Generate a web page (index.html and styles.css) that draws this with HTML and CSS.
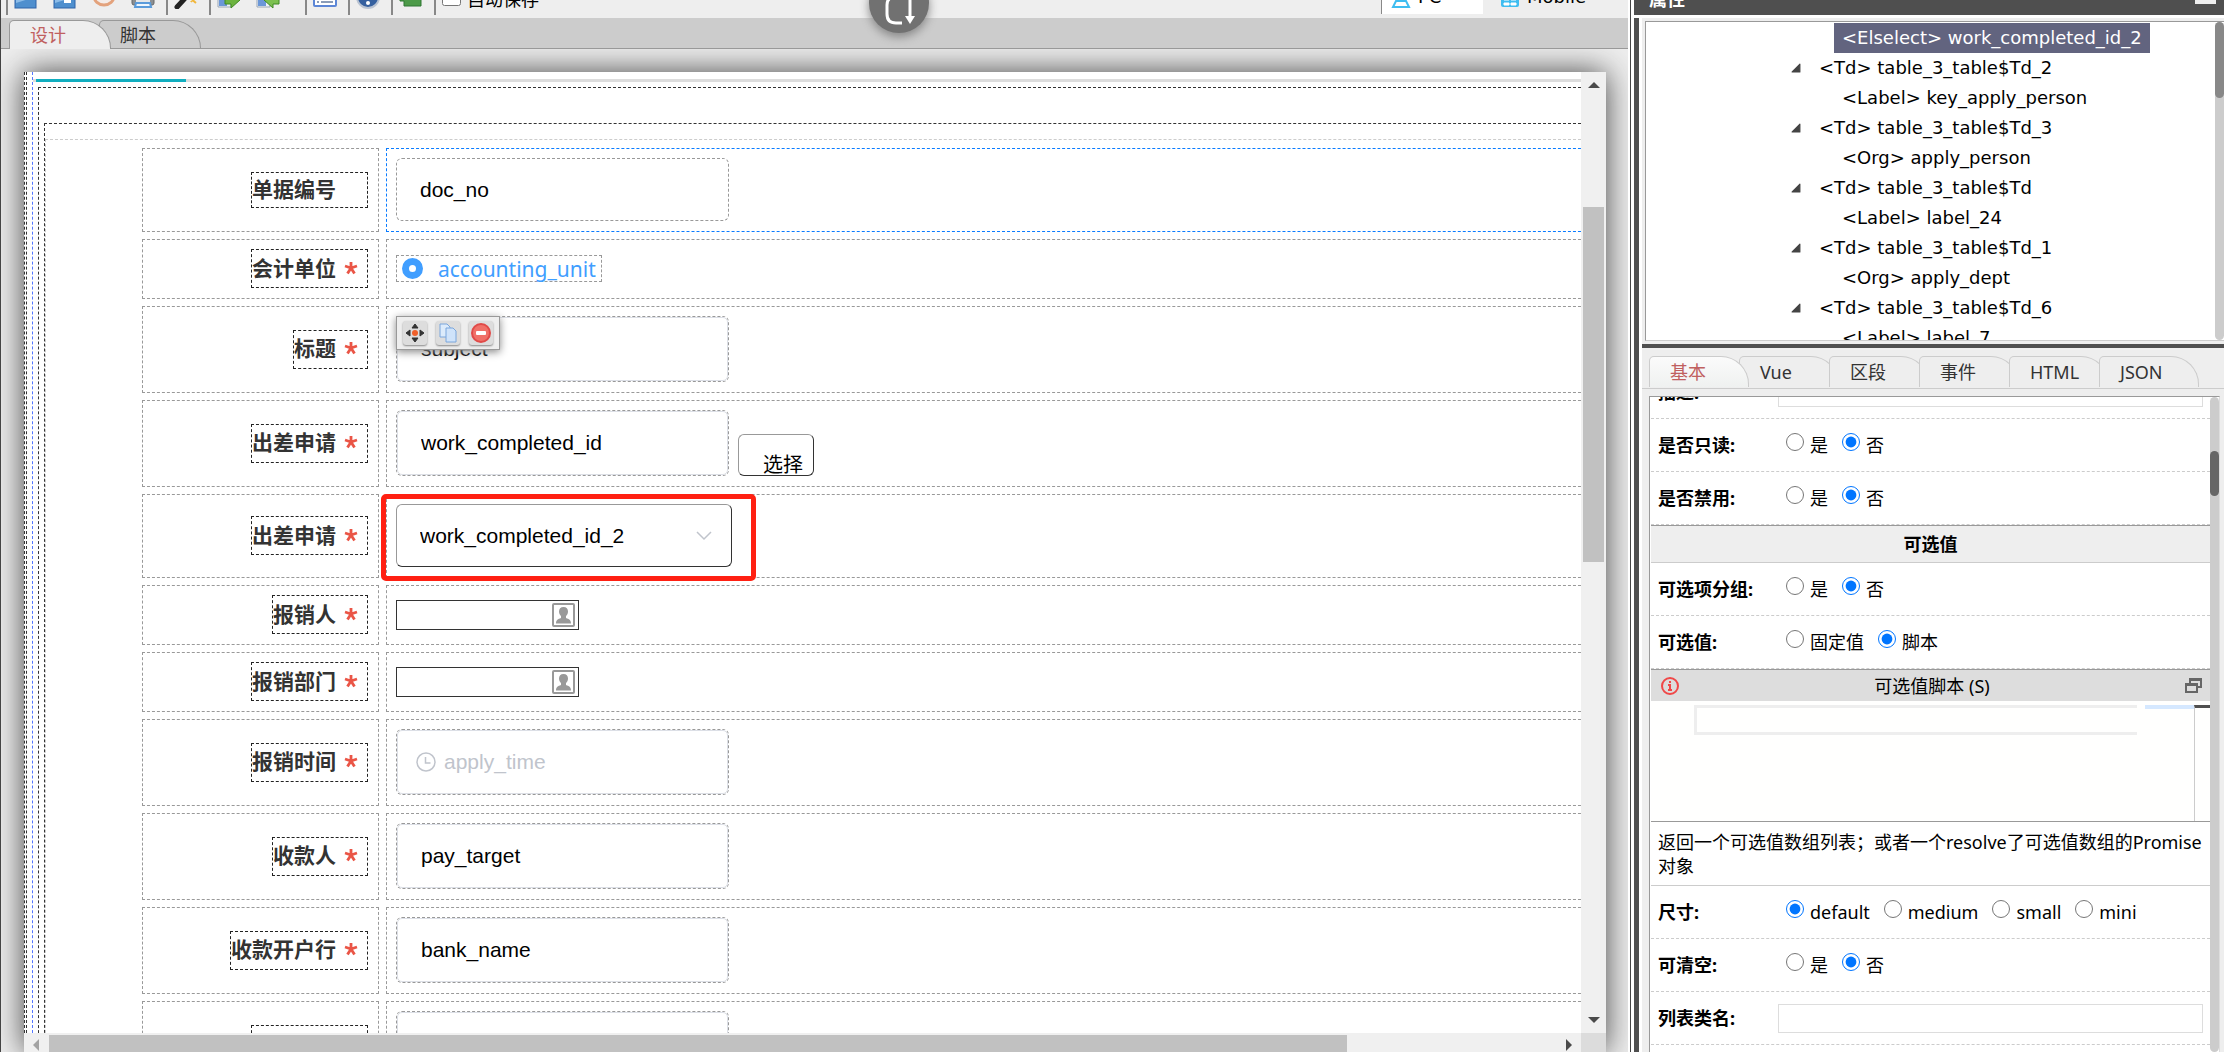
FILE: index.html
```html
<!DOCTYPE html>
<html lang="zh-CN">
<head>
<meta charset="utf-8">
<title>表单设计器</title>
<link rel="stylesheet" href="styles.css">
</head>
<body>
<svg class="defs" aria-hidden="true">
  <symbol id="star" viewBox="0 0 14 14"><path d="M7 1v6M7 7L1 5M7 7l6-2M7 7l-3.500 5.500M7 7l3.500 5.500" fill="none" stroke="#ea5546" stroke-width="2.800"/></symbol>
  <symbol id="person" viewBox="0 0 23 24"><rect x="1" y="1" width="21" height="22" rx="1" fill="#fff" stroke="#999" stroke-width="2"/><path d="M11.500 4c3 0 4.500 2 4.500 4.500 0 2-1 3.500-2 4.500v2c3 1 5 2 5 5.500H4c0-3.500 2-4.500 5-5.500v-2c-1-1-2-2.500-2-4.500C7 6 8.500 4 11.500 4z" fill="#999"/></symbol>
  <symbol id="twist" viewBox="0 0 9 9"><path d="M8 1v7H1z" fill="#444" stroke="#444" stroke-linejoin="round"/></symbol>
</svg>
<div class="app">
  <main class="editor">
    <header class="toolbar">
      <div class="tools">
        <i class="sep"></i>
        <button class="tool" aria-label="保存"><svg viewBox="0 0 24 24"><rect x="1" y="1" width="21" height="22" fill="#4f8fce" stroke="#2f62a8"/><path d="M2 2h19v10L2 18z" fill="#8dbce8"/></svg></button>
        <button class="tool" aria-label="另存"><svg viewBox="0 0 24 24"><rect x="1" y="1" width="21" height="22" fill="#4f8fce" stroke="#2f62a8"/><path d="M2 2h19v10L2 18z" fill="#8dbce8"/><rect x="11" y="3" width="7" height="15" fill="#fff"/></svg></button>
        <button class="tool" aria-label="预览"><svg viewBox="0 0 24 24"><ellipse cx="12" cy="11" rx="10" ry="9" fill="#f4ece8" stroke="#e3a27c" stroke-width="3"/><path d="M6 11q6 7 12 0z" fill="#a9c8ee"/></svg></button>
        <button class="tool" aria-label="打印"><svg viewBox="0 0 24 24"><rect x="1" y="8" width="22" height="12" rx="2" fill="#8b8f92" stroke="#666"/><rect x="5" y="11" width="14" height="6" fill="#e4e6e8"/><path d="M4 22h16l-1-4H5z" fill="#eef6fd" stroke="#5a9bdb" stroke-width="2"/></svg></button>
        <i class="sep"></i>
        <button class="tool" aria-label="样式"><svg viewBox="0 0 24 24"><path d="M3 22L15 9" stroke="#222" stroke-width="5" stroke-linecap="round"/><path d="M8 14l4-4" stroke="#999" stroke-width="2"/><path d="M15 12l7 6M17 17l3-5" stroke="#f1b73c" stroke-width="2"/></svg></button>
        <i class="sep"></i>
        <button class="tool" aria-label="导出"><svg viewBox="0 0 24 24"><path d="M1 1h13v21H1z" fill="#eef3f8" stroke="#9aa6b5"/><path d="M2 21V14h8v7z" fill="#6b97d8"/><path d="M8 11h6V7l9 8-9 8v-4H8z" fill="#6cb33f" stroke="#3f8a22"/></svg></button>
        <button class="tool" aria-label="导入"><svg viewBox="0 0 24 24"><path d="M1 1h13v21H1z" fill="#eef3f8" stroke="#9aa6b5"/><path d="M2 21V14h8v7z" fill="#6b97d8"/><path d="M23 11h-6V7l-9 8 9 8v-4h6z" fill="#7cc050" stroke="#3f8a22"/></svg></button>
        <i class="drop"></i>
        <i class="sep"></i>
        <button class="tool" aria-label="列表"><svg viewBox="0 0 24 24"><rect x="1" y="1" width="22" height="20" rx="1" fill="#fff" stroke="#5c86d6" stroke-width="2"/><path d="M4 8h2M8 8h12M4 13h2M8 13h12M4 17h2M8 17h12" stroke="#8a9cb8" stroke-width="2"/></svg></button>
        <i class="sep"></i>
        <button class="tool" aria-label="帮助"><svg viewBox="0 0 24 24"><circle cx="12" cy="12" r="11" fill="#35609f" stroke="#b9c3d2" stroke-width="2"/><circle cx="12" cy="18" r="2" fill="#fff"/><path d="M12 15v-4" stroke="#fff" stroke-width="3"/></svg></button>
        <i class="sep"></i>
        <button class="tool" aria-label="组件"><svg viewBox="0 0 24 24"><path d="M1 8h7l2 3h12v10H5v-5H1z" fill="#4c9a48" stroke="#2e7732"/></svg></button>
        <i class="sep"></i>
        <label class="autosave"><input type="checkbox"> 自动保存</label>
        <div class="devices">
          <button class="device on"><svg viewBox="0 0 22 22"><path d="M1 2h20v11H1z" fill="#8fdcf8" stroke="#3fbdf0" stroke-width="2"/><path d="M6 15h10l3 6H3z" fill="#fff" stroke="#3fbdf0" stroke-width="2"/></svg>PC</button>
          <button class="device"><svg viewBox="0 0 22 22"><rect x="2" y="1" width="18" height="20" rx="2" fill="#3fbdf0"/><path d="M4 8h14M5 12h5v2H5zM12 12h5v2h-5zM5 17h5v2H5zM12 17h5v2h-5z" fill="#fff" stroke="#fff"/></svg>Mobile</button>
        </div>
      </div>
    </header>
    <nav class="maintabs">
      <button class="maintab on">设计</button>
      <button class="maintab">脚本</button>
    </nav>
    <button class="refresh" aria-label="刷新"><svg viewBox="0 0 34 34"><path d="M18 6h-5q-8 0-8 8v9q0 9 9 9h6M28 4v22" fill="none" stroke="#fff" stroke-width="3"/><path d="M23 25h10l-5 8z" fill="#fff"/></svg></button>
    <section class="canvas">
      <div class="page">
        <div class="view">
          <div class="frame1"><div class="frame2">
            <div class="line"><span></span></div>
            <div class="box1"><div class="box2"><div class="box3">
              <form class="form">
                <div class="cell name"><label class="lab plain" for="f1">单据编号</label></div>
                <div class="cell sel"><input class="field flat" id="f1" value="doc_no"></div>

                <div class="cell name"><span class="lab">会计单位<svg><use href="#star"/></svg></span></div>
                <div class="cell"><label class="unit"><input type="radio" name="unit" checked>accounting_unit</label></div>

                <div class="cell name"><label class="lab" for="f3">标题<svg><use href="#star"/></svg></label></div>
                <div class="cell"><div class="wrap"><input class="field" id="f3" value="subject"></div>
                  <div class="actions">
                    <button type="button" aria-label="移动"><svg viewBox="0 0 20 20"><path d="M10 1l3 4H7zM10 19l-3-4h6zM1 10l4-3v6zM19 10l-4 3V7z" fill="#333" stroke="#333"/><circle cx="10" cy="10" r="3" fill="#f0602a"/></svg></button>
                    <button type="button" aria-label="复制"><svg viewBox="0 0 20 20"><path d="M2 1h7l3 3v10H2z" fill="#dcebfb" stroke="#7ba6dc"/><path d="M8 5h7l3 3v11H8z" fill="#cfe3fa" stroke="#7ba6dc"/></svg></button>
                    <button type="button" aria-label="删除"><svg viewBox="0 0 20 20"><circle cx="10" cy="10" r="9" fill="#f07068" stroke="#e04a48" stroke-width="2"/><rect x="5" y="8" width="10" height="4" rx="1" fill="#fff"/></svg></button>
                  </div>
                </div>

                <div class="cell name"><label class="lab" for="f4">出差申请<svg><use href="#star"/></svg></label></div>
                <div class="cell"><div class="wrap"><input class="field" id="f4" value="work_completed_id"></div><button type="button" class="pick">选择</button></div>

                <div class="cell name"><label class="lab" for="f5">出差申请<svg><use href="#star"/></svg></label></div>
                <div class="cell"><div class="drop-wrap"><select class="choice" id="f5"><option>work_completed_id_2</option></select><svg viewBox="0 0 16 10"><path d="M1 1l7 7 7-7" fill="none" stroke="#c0c4cc" stroke-width="1.500"/></svg></div><div class="mark"></div></div>

                <div class="cell name"><label class="lab" for="f6">报销人<svg><use href="#star"/></svg></label></div>
                <div class="cell"><div class="org"><input id="f6"><svg><use href="#person"/></svg></div></div>

                <div class="cell name"><label class="lab" for="f7">报销部门<svg><use href="#star"/></svg></label></div>
                <div class="cell"><div class="org"><input id="f7"><svg><use href="#person"/></svg></div></div>

                <div class="cell name"><label class="lab" for="f8">报销时间<svg><use href="#star"/></svg></label></div>
                <div class="cell"><div class="wrap time"><svg viewBox="0 0 20 20"><circle cx="10" cy="10" r="9" fill="none" stroke="#c0c4cc" stroke-width="1.500"/><path d="M9.500 5v6h5" fill="none" stroke="#c0c4cc" stroke-width="1.500"/></svg><input class="field" id="f8" placeholder="apply_time"></div></div>

                <div class="cell name"><label class="lab" for="f9">收款人<svg><use href="#star"/></svg></label></div>
                <div class="cell"><div class="wrap"><input class="field" id="f9" value="pay_target"></div></div>

                <div class="cell name"><label class="lab" for="f10">收款开户行<svg><use href="#star"/></svg></label></div>
                <div class="cell"><div class="wrap"><input class="field" id="f10" value="bank_name"></div></div>

                <div class="cell name"><label class="lab" for="f11">收款账号<svg><use href="#star"/></svg></label></div>
                <div class="cell"><div class="wrap"><input class="field" id="f11"></div></div>
              </form>
            </div></div></div>
          </div></div>
        </div>
        <div class="vbar"><i class="up"></i><i class="vthumb"></i><i class="down"></i></div>
        <div class="hbar"><i class="left"></i><i class="hthumb"></i><i class="right"></i></div>
        <div class="corner"></div>
      </div>
    </section>
  </main>

  <div class="gutter"></div>

  <aside class="side">
    <header class="sidehead"><span>属性</span><i></i></header>
    <div class="sidebody">
      <div class="treebox">
        <ul class="tree">
          <li class="leaf"><span class="picked">&lt;Elselect&gt; work_completed_id_2</span></li>
          <li><svg><use href="#twist"/></svg>&lt;Td&gt; table_3_table$Td_2</li>
          <li class="leaf"><span>&lt;Label&gt; key_apply_person</span></li>
          <li><svg><use href="#twist"/></svg>&lt;Td&gt; table_3_table$Td_3</li>
          <li class="leaf"><span>&lt;Org&gt; apply_person</span></li>
          <li><svg><use href="#twist"/></svg>&lt;Td&gt; table_3_table$Td</li>
          <li class="leaf"><span>&lt;Label&gt; label_24</span></li>
          <li><svg><use href="#twist"/></svg>&lt;Td&gt; table_3_table$Td_1</li>
          <li class="leaf"><span>&lt;Org&gt; apply_dept</span></li>
          <li><svg><use href="#twist"/></svg>&lt;Td&gt; table_3_table$Td_6</li>
          <li class="leaf"><span>&lt;Label&gt; label_7</span></li>
        </ul>
        <div class="treebar"><i></i></div>
      </div>
      <div class="splitter"></div>
      <nav class="tabs">
        <button class="tab on">基本</button><button class="tab">Vue</button><button class="tab">区段</button><button class="tab">事件</button><button class="tab">HTML</button><button class="tab">JSON</button>
      </nav>
      <div class="props">
        <div class="list">
          <div class="row"><label class="key" for="p0">描述:</label><input class="text" id="p0"></div>
          <div class="row"><span class="key">是否只读:</span><div class="opts"><label><input type="radio" name="ro">是</label><label><input type="radio" name="ro" checked>否</label></div></div>
          <div class="row"><span class="key">是否禁用:</span><div class="opts"><label><input type="radio" name="dis">是</label><label><input type="radio" name="dis" checked>否</label></div></div>
          <h3 class="group">可选值</h3>
          <div class="row"><span class="key">可选项分组:</span><div class="opts"><label><input type="radio" name="grp">是</label><label><input type="radio" name="grp" checked>否</label></div></div>
          <div class="row"><span class="key">可选值:</span><div class="opts"><label><input type="radio" name="val">固定值</label><label><input type="radio" name="val" checked>脚本</label></div></div>
          <div class="scripthead">
            <svg viewBox="0 0 18 18"><circle cx="9" cy="9" r="8" fill="none" stroke="#f04848" stroke-width="2"/><path d="M9 4v2M7 8h2v5M7 13h4" fill="none" stroke="#f04848" stroke-width="2"/></svg>
            <span>可选值脚本 (S)</span>
            <svg viewBox="0 0 18 18"><path d="M5 6V2h11v8h-4M1 7h11v8H1zM5 3h11M1 8h11" fill="none" stroke="#666" stroke-width="2"/></svg>
          </div>
          <div class="code"><div class="codeline"></div><div class="minimap"></div><div class="ruler"></div></div>
          <p class="help">返回一个可选值数组列表；或者一个resolve了可选值数组的Promise对象</p>
          <div class="row"><span class="key">尺寸:</span><div class="opts"><label><input type="radio" name="size" checked>default</label><label><input type="radio" name="size">medium</label><label><input type="radio" name="size">small</label><label><input type="radio" name="size">mini</label></div></div>
          <div class="row"><span class="key">可清空:</span><div class="opts"><label><input type="radio" name="clr">是</label><label><input type="radio" name="clr" checked>否</label></div></div>
          <div class="row"><label class="key" for="p1">列表类名:</label><input class="text" id="p1"></div>
          <div class="row"></div>
        </div>
        <div class="propbar"><i></i></div>
      </div>
    </div>
  </aside>
</div>
</body>
</html>
```
FILE: styles.css
```css
* { box-sizing: border-box; }
body {
  margin: 0;
  background: #fff;
  color: #000;
  font: 18px/24px "Noto Sans", "Noto Sans CJK SC", sans-serif;
}
button, input, select { font: inherit; color: inherit; margin: 0; padding: 0; border: 0; background: none; }
i { font-style: normal; }
.defs { display: none; }
.app { display: flex; height: 100vh; overflow: hidden; }

/* editor column */
.editor {
  position: relative;
  flex: 1;
  min-width: 0;
  display: flex;
  flex-direction: column;
  border-left: 1px solid #444;
  background: #fff;
}
.toolbar {
  display: flex;
  align-items: flex-end;
  height: 18px;
  overflow: hidden;
  background: #eee;
}
.tools { display: flex; align-items: center; flex: 1; height: 38px; padding-left: 5px; gap: 14px; }
.sep { width: 2px; height: 35px; background: #888; margin: 0 -8px 0 -4px; align-self: flex-start; flex: none; }
.sep:first-child { margin-left: 0; }
.tool { width: 25px; height: 24px; margin-bottom: 4px; }
.tool svg { display: block; width: 24px; height: 24px; }
.drop { width: 0; height: 0; margin: 0 0 0 -8px; border: 4px solid transparent; border-top-color: #222; }
.autosave { display: flex; align-items: center; gap: 6px; }
.autosave input { width: 19px; height: 19px; margin-bottom: 5px; }
.devices { display: flex; align-items: flex-start; align-self: stretch; margin-left: auto; padding-right: 34px; }
.device { display: flex; align-items: center; gap: 6px; height: 34px; padding: 0 8px; font: 18px/24px "DejaVu Sans", sans-serif; }
.device svg { width: 22px; height: 22px; }
.device.on { width: 102px; margin-right: 8px; background: #fff; border-left: 1px solid #888; }

.maintabs { display: flex; align-items: flex-end; height: 31px; padding-left: 8px; background: #ccc; border-bottom: 1px solid #999; }
.maintab {
  width: 102px;
  height: 28px;
  padding-left: 20px;
  text-align: left;
  color: #333;
  border: 1px solid #999;
  border-bottom: 0;
  border-radius: 5px 28px 0 0;
  margin-left: -12px;
  line-height: 28px;
}
.maintab.on { position: relative; margin: 0 0 -1px 0; height: 29px; background: #eee; color: #c0605f; }
.refresh {
  position: absolute;
  left: 868px;
  top: -27px;
  width: 60px;
  height: 60px;
  border-radius: 50%;
  background: #717171;
  box-shadow: 0 4px 10px #888;
}
.refresh svg { display: block; width: 34px; height: 34px; margin: 10px auto 0; }

.canvas { flex: 1; min-height: 0; overflow: hidden; background: #eee; padding: 23px 22px 0 23px; }
.page {
  display: grid;
  grid-template: minmax(0, 1fr) 19px / minmax(0, 1fr) 25px;
  height: 100%;
  background: #fff;
  box-shadow: 0 0 30px #444;
}
.view { overflow: hidden; border-left: 1px dashed #333; padding-left: 1px; }
.frame1 { height: 100%; border-left: 1px dashed #333; padding-left: 5px; }
.frame2 { height: 100%; border-left: 1px dashed #5577ff; padding: 7px 0 0; }
.line { height: 3px; background: #ddd; padding-left: 3px; }
.line span { display: block; width: 150px; height: 3px; background: #10aebf; }
.box1 { margin: 5px 0 0 5px; padding: 35px 0 0 5px; border: dashed #333; border-width: 1px 0 0 1px; }
.box2 { padding-top: 15px; border: dashed #333; border-width: 1px 0 0 1px; }
.box3 { border: dashed #ccc; border-width: 1px 0 0 1px; padding: 8px 0 0 96px; }

.form { display: grid; grid-template-columns: 237px minmax(0, 1fr); gap: 7px; margin-right: -20px; }
.cell {
  position: relative;
  display: flex;
  align-items: center;
  border: 1px dashed #999;
  padding: 9px 9px 10px;
}
.cell.sel { border-color: #0a7cff; }
.name { justify-content: flex-end; padding-right: 10px; }
.lab {
  display: flex;
  align-items: center;
  gap: 8px;
  height: 39px;
  padding: 0 9px 2px 0;
  border: 1px dashed #222;
  color: #333;
  font-size: 21px;
  line-height: 34px;
  font-weight: bold;
  white-space: nowrap;
}
.lab.plain { height: 36px; padding-right: 31px; }
.lab svg { width: 14px; height: 14px; }
.wrap { width: 333px; border: 1px dashed #999; border-radius: 6px; height: 66px; }
.field {
  display: block;
  width: 100%;
  height: 64px;
  padding: 0 23px;
  border: 1px solid #dcdfe6;
  border-radius: 5px;
  font: 21px/24px "Liberation Sans", Arial, sans-serif;
}
.field::placeholder { color: #c0c4cc; opacity: 1; }
.field.flat { width: 333px; height: 63px; border: 1px dashed #999; border-radius: 6px; }
.time { position: relative; }
.time svg { position: absolute; left: 19px; top: 22px; width: 20px; height: 20px; }
.time .field { padding-left: 46px; }
.unit {
  display: flex;
  align-items: center;
  gap: 15px;
  height: 27px;
  padding: 0 5px;
  border: 1px dashed #999;
  color: #409eff;
  font-size: 21px;
}
.unit input { appearance: none; width: 21px; height: 21px; border: 7px solid #409eff; border-radius: 50%; background: #fff; }
.actions {
  position: absolute;
  left: 9px;
  top: 9px;
  display: flex;
  gap: 9px;
  padding: 4px 6px;
  border: 1px solid #999;
  background: #eee;
  box-shadow: 0 2px 8px #888;
}
.actions button { width: 24px; height: 24px; padding: 2px; border-radius: 3px; background: #ddd; box-shadow: 0 1px 2px #888; }
.actions svg { display: block; width: 20px; height: 20px; }
.pick {
  align-self: flex-end;
  width: 76px;
  height: 42px;
  margin-left: 9px;
  padding: 20px 0 0 14px;
  border: 1px solid #999;
  border-right-color: #333;
  border-bottom-color: #333;
  border-radius: 6px;
  font-size: 20px;
  line-height: 20px;
}
.drop-wrap { position: relative; width: 336px; }
.choice {
  appearance: none;
  display: block;
  width: 100%;
  height: 63px;
  padding: 0 23px;
  border: 1px solid #999;
  border-right-color: #333;
  border-bottom-color: #333;
  border-radius: 6px;
  font: 21px/24px "Liberation Sans", Arial, sans-serif;
}
.drop-wrap svg { position: absolute; right: 20px; top: 27px; width: 16px; height: 10px; }
.mark { position: absolute; left: -6px; top: -1px; width: 375px; height: 87px; border: 5px solid #ff2012; border-radius: 5px; z-index: 1; }
.org { display: flex; align-items: center; width: 183px; height: 30px; padding-right: 3px; border: 1px solid #333; }
.org input { flex: 1; min-width: 0; height: 28px; }
.org svg { width: 23px; height: 24px; }

.vbar { display: flex; flex-direction: column; align-items: center; background: #f0f0f0; padding: 10px 0; }
.vbar i, .hbar i { flex: none; }
.up { border: 6px solid transparent; border-top: 0; border-bottom-color: #4a4a4a; }
.vthumb { width: 21px; height: 355px; margin-top: 119px; background: #c1c1c1; }
.down { margin-top: auto; border: 6px solid transparent; border-bottom: 0; border-top-color: #4a4a4a; }
.hbar { display: flex; align-items: flex-start; padding: 2px 9px 0 9px; background: #f0f0f0; }
.left { border: 6px solid transparent; border-left: 0; border-right-color: #a3a3a3; margin-top: 4px; }
.hthumb { width: 1298px; height: 17px; margin-left: 10px; background: #c1c1c1; }
.right { margin: 4px 0 0 auto; border: 6px solid transparent; border-right: 0; border-left-color: #4a4a4a; }
.corner { background: #dcdcdc; }

.gutter { width: 6px; background: linear-gradient(90deg, #fff 2px, #444 2px, #444 3px, #fff 3px); }

/* property column */
.side { width: 590px; display: flex; flex-direction: column; }
.sidehead { position: relative; display: flex; align-items: flex-end; justify-content: space-between; height: 15px; margin-bottom: 3px; padding: 0 8px 0 15px; overflow: hidden; background: #4f4f4f; color: #fff; font-weight: bold; }
.sidehead i { width: 21px; height: 4px; background: #eee; align-self: flex-start; }
.sidehead span { margin-bottom: 4px; }
.sidebody { flex: 1; min-height: 0; display: flex; flex-direction: column; background: #eee; border-left: 5px solid #4f4f4f; padding-left: 3px; box-shadow: inset 3px 0 #fff; }
.treebox { display: flex; flex: none; height: 320px; margin: 3px 0 3px 3px; border: 1px solid #999; border-bottom-color: #ccc; border-right: 0; background: #fff; overflow: hidden; font-family: "DejaVu Sans", sans-serif; }
.tree { flex: 1; list-style: none; margin: 0; padding: 1px 0 0 145px; }
.tree li { display: flex; align-items: center; height: 30px; line-height: 30px; white-space: nowrap; }
.tree li svg { width: 10px; height: 10px; margin-right: 18px; }
.tree .leaf { padding-left: 43px; }
.tree .leaf span { padding: 0 8px; }
.tree .picked { background: #62647f; color: #fff; }
.treebar { width: 9px; border-radius: 5px; background: #ccc; }
.treebar i { display: block; height: 76px; border-radius: 5px; background: #888; }
.splitter { flex: none; height: 4px; background: #4f4f4f; }
.tabs { flex: none; display: flex; height: 41px; padding: 8px 0 0 7px; border-bottom: 1px solid #ccc; }
.tab {
  width: 100px;
  height: 31px;
  margin-right: -10px;
  padding-left: 20px;
  text-align: left;
  line-height: 30px;
  color: #333;
  border: 1px solid #ccc;
  border-bottom: 0;
  border-radius: 5px 28px 0 0;
  background: #eee;
}
.tab.on { position: relative; background: linear-gradient(#fbfbfb, #eff1f0); color: #c0605f; }
.props { flex: 1; min-height: 0; display: flex; margin: 7px 4px 0 7px; padding-left: 1px; border: 1px solid #999; border-right-color: #ddd; border-bottom: 0; background: #fff; overflow: hidden; }
.list { flex: 1; min-width: 0; margin-top: -31px; }
.row { display: flex; align-items: center; height: 53px; padding-right: 7px; border-bottom: 1px dashed #ccc; }
.key { width: 127px; padding-left: 7px; font-weight: bold; }
.text { flex: 1; min-width: 0; height: 29px; border: 1px solid #ddd; }
.opts { display: flex; gap: 14px; padding-left: 8px; }
.opts label { display: flex; align-items: center; gap: 6px; }
.opts input { width: 18px; height: 18px; margin-bottom: 6px; accent-color: #0075ff; }
.group { margin: 0; height: 38px; font-size: 18px; line-height: 36px; text-align: center; background: #eee; border-top: 1px solid #999; border-bottom: 1px solid #ccc; }
.scripthead { display: flex; align-items: center; justify-content: space-between; height: 32px; padding: 0 7px 0 10px; border-top: 1px solid #999; background: #ddd; }
.scripthead svg { width: 18px; height: 18px; }
.code { display: flex; height: 121px; padding: 4px 0 0 43px; border-bottom: 1px solid #999; background: #fffffe; }
.codeline { flex: 1; height: 30px; border: 3px solid #eee; border-right: 0; }
.minimap { width: 49px; height: 4px; margin-left: 8px; background: #d5e8ff; }
.ruler { width: 16px; border-left: 1px solid #ccc; border-top: 3px solid #4f4f4f; }
.help { margin: 0; height: 64px; padding: 8px 4px 0 7px; border-bottom: 1px solid #ccc; }
.propbar { width: 9px; border-radius: 5px; background: #ccc; }
.propbar i { display: block; height: 45px; margin-top: 54px; border-radius: 5px; background: #666; }
```
